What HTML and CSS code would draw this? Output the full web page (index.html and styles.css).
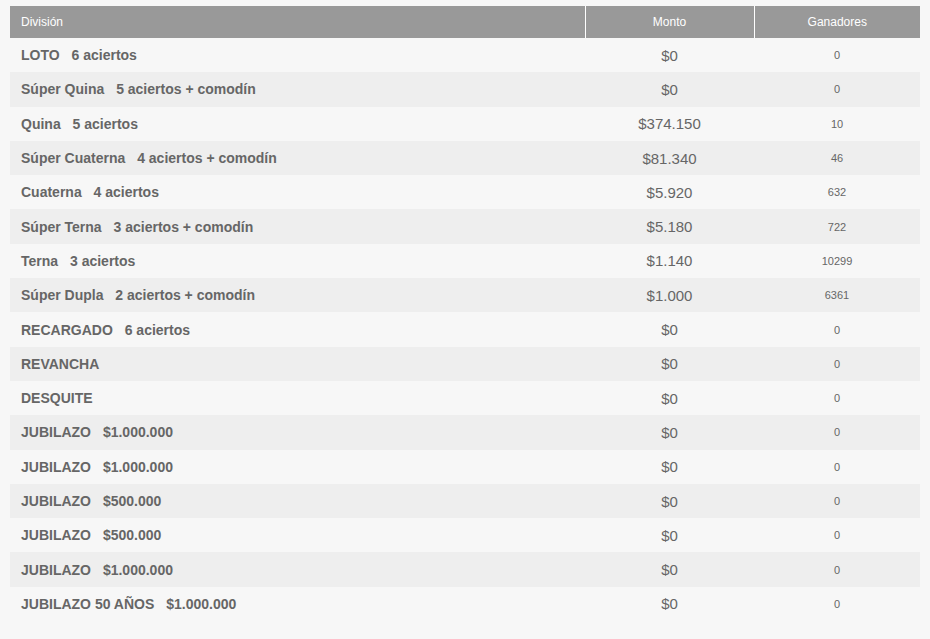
FILE: index.html
```html
<!DOCTYPE html>
<html lang="es">
<head>
<meta charset="utf-8">
<title>Resultados</title>
<link rel="stylesheet" href="styles.css">
</head>
<body>
<table class="prizes">
  <colgroup>
    <col class="c1">
    <col class="c2">
    <col class="c3">
  </colgroup>
  <thead>
    <tr>
      <th class="col-div">División</th>
      <th class="col-monto">Monto</th>
      <th class="col-gan">Ganadores</th>
    </tr>
  </thead>
  <tbody>
    <tr><td class="div">LOTO <span class="sub">6 aciertos</span></td><td class="monto">$0</td><td class="gan">0</td></tr>
    <tr><td class="div">Súper Quina <span class="sub">5 aciertos + comodín</span></td><td class="monto">$0</td><td class="gan">0</td></tr>
    <tr><td class="div">Quina <span class="sub">5 aciertos</span></td><td class="monto">$374.150</td><td class="gan">10</td></tr>
    <tr><td class="div">Súper Cuaterna <span class="sub">4 aciertos + comodín</span></td><td class="monto">$81.340</td><td class="gan">46</td></tr>
    <tr><td class="div">Cuaterna <span class="sub">4 aciertos</span></td><td class="monto">$5.920</td><td class="gan">632</td></tr>
    <tr><td class="div">Súper Terna <span class="sub">3 aciertos + comodín</span></td><td class="monto">$5.180</td><td class="gan">722</td></tr>
    <tr><td class="div">Terna <span class="sub">3 aciertos</span></td><td class="monto">$1.140</td><td class="gan">10299</td></tr>
    <tr><td class="div">Súper Dupla <span class="sub">2 aciertos + comodín</span></td><td class="monto">$1.000</td><td class="gan">6361</td></tr>
    <tr><td class="div">RECARGADO <span class="sub">6 aciertos</span></td><td class="monto">$0</td><td class="gan">0</td></tr>
    <tr><td class="div">REVANCHA</td><td class="monto">$0</td><td class="gan">0</td></tr>
    <tr><td class="div">DESQUITE</td><td class="monto">$0</td><td class="gan">0</td></tr>
    <tr><td class="div">JUBILAZO <span class="sub">$1.000.000</span></td><td class="monto">$0</td><td class="gan">0</td></tr>
    <tr><td class="div">JUBILAZO <span class="sub">$1.000.000</span></td><td class="monto">$0</td><td class="gan">0</td></tr>
    <tr><td class="div">JUBILAZO <span class="sub">$500.000</span></td><td class="monto">$0</td><td class="gan">0</td></tr>
    <tr><td class="div">JUBILAZO <span class="sub">$500.000</span></td><td class="monto">$0</td><td class="gan">0</td></tr>
    <tr><td class="div">JUBILAZO <span class="sub">$1.000.000</span></td><td class="monto">$0</td><td class="gan">0</td></tr>
    <tr><td class="div">JUBILAZO 50 AÑOS <span class="sub">$1.000.000</span></td><td class="monto">$0</td><td class="gan">0</td></tr>
  </tbody>
</table>
</body>
</html>
```
FILE: styles.css
```css
html, body {
  margin: 0;
  background: #f7f7f7;
}
body {
  padding: 6px 10px 0 10px;
  font-family: "Liberation Sans", Arial, sans-serif;
  color: #666666;
}
.prizes {
  width: 910px;
  border-collapse: collapse;
  table-layout: fixed;
}
.c1 { width: 575px; }
.c2 { width: 169px; }
.c3 { width: 166px; }
.prizes th {
  background: #999999;
  color: #ffffff;
  font-weight: normal;
  font-size: 12px;
  height: 32px;
  padding: 0;
  border-left: 1px solid #ffffff;
}
.prizes th:first-child {
  border-left: none;
}
.col-div {
  text-align: left;
  padding-left: 11px !important;
}
.col-monto,
.col-gan {
  text-align: center;
}
.prizes td {
  height: 34.3px;
  padding: 0;
  box-sizing: border-box;
}
.prizes tbody tr:nth-child(even) td {
  background: #eeeeee;
}
.div {
  font-size: 14px;
  font-weight: bold;
  padding-left: 11px !important;
  white-space: nowrap;
}
.sub {
  margin-left: 8px;
}
.monto {
  font-size: 15px;
  text-align: center;
}
.gan {
  font-size: 11px;
  text-align: center;
}
```
